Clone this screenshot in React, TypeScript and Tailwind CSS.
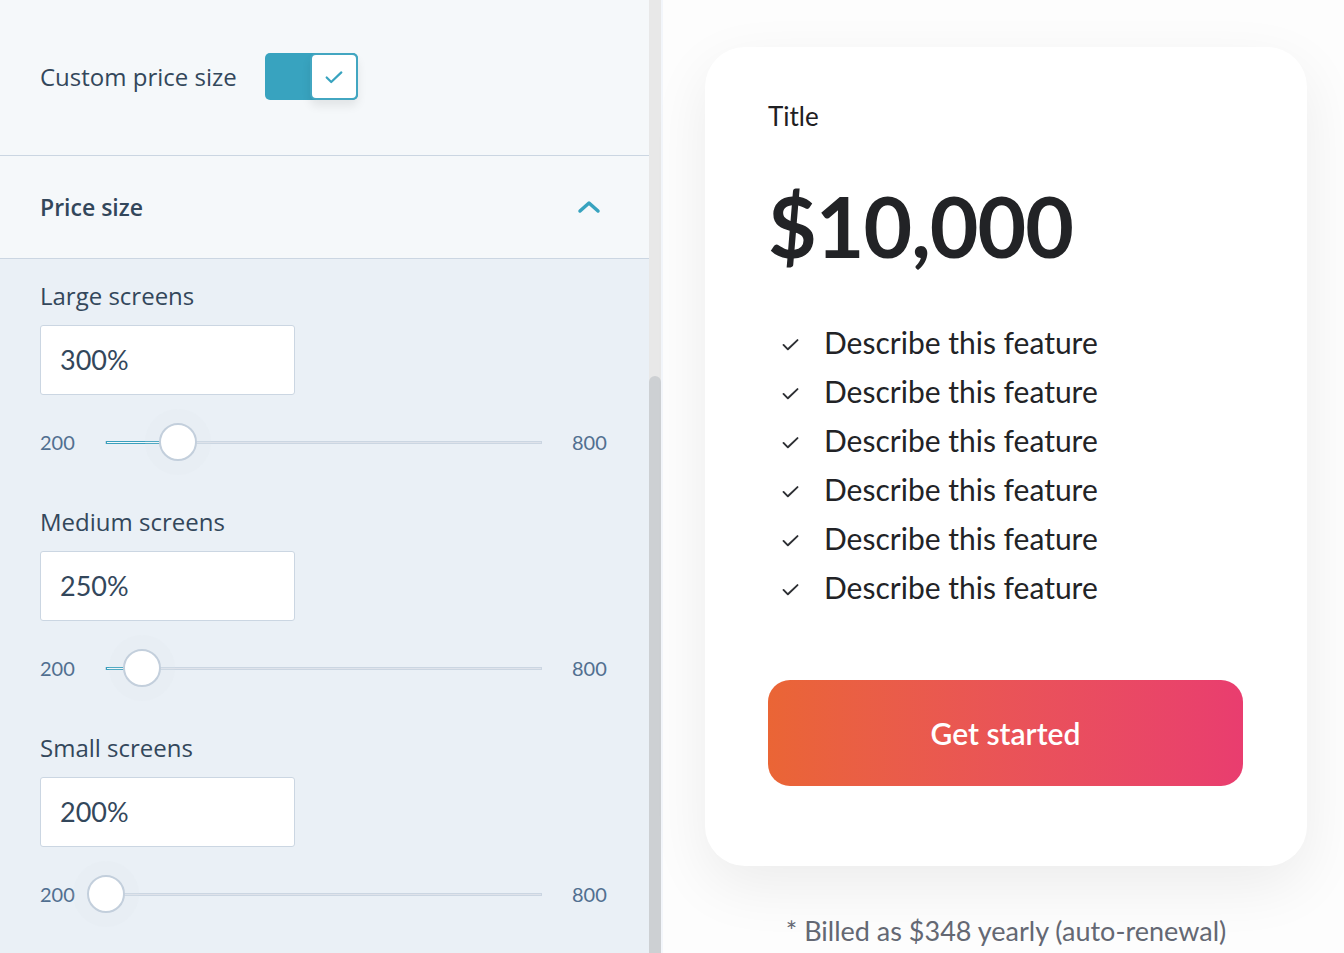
import React from 'react';

const panelFont = { fontFamily: '"Open Sans", Lato, sans-serif' };
const numFont = { fontFamily: 'Lato, "Noto Sans", sans-serif' };

interface SizeRowProps {
  label: string;
  value: number;
}

const SizeRow: React.FC<SizeRowProps> = ({ label, value }) => {
  const pct = ((value - 200) / 600) * 100;
  return (
    <div className="flex flex-col">
      <div className="text-[24px] leading-[28px] text-[#33475b]">{label}</div>
      <div
        className="mt-[15px] w-[255px] h-[70px] bg-white border border-[#cbd6e2] rounded-[3px] flex items-center pl-[19px] text-[27px] text-[#33475b]"
        style={numFont}
      >
        {value}%
      </div>
      <div className="mt-[28px] flex items-center h-[38px]" style={numFont}>
        <span className="text-[20px] text-[#516f90] w-[65px]">200</span>
        <div className="relative w-[437px] h-[3px] bg-[#dfe3eb] border border-[#cbd6e2]">
          <div
            className="absolute left-0 top-[-1px] h-[3px] border border-[#3aa0bd] bg-[#f5f8fa]"
            style={{ width: `${pct}%` }}
          />
          <div
            className="absolute top-1/2 w-[38px] h-[38px] -translate-x-1/2 -translate-y-1/2 rounded-full bg-white border-2 border-[#c3cfdc] shadow-[0_0_0_14px_rgba(220,228,238,0.15)]"
            style={{ left: `${pct}%` }}
          />
        </div>
        <span className="ml-[30px] text-[20px] text-[#516f90]">800</span>
      </div>
    </div>
  );
};

const Check = () => (
  <svg width="21" height="21" viewBox="0 0 24 24" fill="none" stroke="#2d2f33" strokeWidth="2.2" strokeLinecap="round" strokeLinejoin="round">
    <path d="M4 12.5l5 5L20 7" />
  </svg>
);

const App: React.FC = () => {
  return (
    <div className="flex w-[1344px] h-[953px] overflow-hidden bg-[#fdfdfd]">
      <div className="w-[649px] h-full flex flex-col" style={panelFont}>
        <div className="h-[156px] bg-[#f5f8fa] border-b border-[#cbd6e2] flex items-center pl-[40px] pb-[2px]">
          <span className="text-[24px] text-[#33475b]">Custom price size</span>
          <div className="ml-[28px] relative w-[93px] h-[47px] rounded-[5px] bg-[#38a3bf]">
            <div className="absolute right-0 top-0 w-[48px] h-[47px] bg-white border-2 border-[#42a6c1] rounded-[6px] flex items-center justify-center shadow-[0_6px_10px_rgba(0,0,0,0.08)]">
              <svg width="22" height="22" viewBox="0 0 24 24" fill="none" stroke="#38a3bf" strokeWidth="2.4" strokeLinecap="round" strokeLinejoin="round">
                <path d="M4 12.5l5 5L20 7" />
              </svg>
            </div>
          </div>
        </div>
        <div className="h-[103px] bg-[#f5f8fa] border-b border-[#cbd6e2] flex items-center justify-between pl-[40px] pr-[48px]">
          <span className="text-[23px] font-semibold text-[#33475b]">Price size</span>
          <svg width="24" height="16" viewBox="0 0 24 16" fill="none" stroke="#38a3bf" strokeWidth="3.5" strokeLinecap="round" strokeLinejoin="round">
            <path d="M3 12l9-8 9 8" />
          </svg>
        </div>
        <div className="flex-1 bg-[#eaf0f6] pl-[40px] pt-[23px] flex flex-col gap-[47px]">
          <SizeRow label="Large screens" value={300} />
          <SizeRow label="Medium screens" value={250} />
          <SizeRow label="Small screens" value={200} />
        </div>
      </div>

      <div className="w-[12px] h-full bg-[#e8e8e8] flex flex-col">
        <div className="mt-[376px] flex-1 bg-[#cdd0d3] rounded-t-[6px]" />
      </div>
      <div className="w-[2px] h-full bg-[#f3f6fb]" />

      <div className="flex-1 pl-[42px] pt-[47px]" style={numFont}>
        <div className="w-[602px] h-[819px] bg-white rounded-[40px] shadow-[0_20px_60px_rgba(0,0,0,0.07)] pl-[63px] pr-[64px] pt-[52px] flex flex-col">
          <div className="text-[26px] leading-[34px] text-[#1f2023]">Title</div>
          <div className="mt-[48px] text-[84px] leading-[90px] font-bold text-[#222326] tracking-[-1px]">$10,000</div>
          <div className="mt-[47px] flex flex-col">
            {Array.from({ length: 6 }).map((_, i) => (
              <div key={i} className="flex items-center h-[49px]">
                <span className="ml-[12px] w-[44px] flex items-center pt-[4px]">
                  <Check />
                </span>
                <span className="text-[30px] text-[#222326]">Describe this feature</span>
              </div>
            ))}
          </div>
          <button className="mt-[68px] w-[475px] h-[106px] rounded-[22px] bg-gradient-to-r from-[#ea6535] to-[#e93d6f] text-white text-[30px] font-semibold">
            Get started
          </button>
        </div>
        <div className="w-[602px] mt-[45px] text-center text-[27px] text-[#646873]">
          * Billed as $348 yearly (auto-renewal)
        </div>
      </div>
    </div>
  );
};

export default App;
